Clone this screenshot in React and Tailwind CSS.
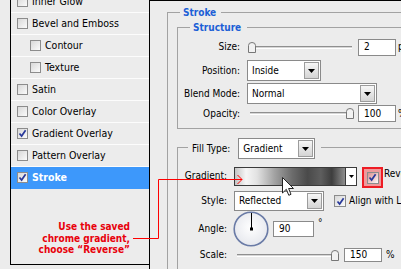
import React from 'react';

const Check = ({ checked, className = '' }) => (
  <span className={`flex size-[11px] shrink-0 items-center justify-center border border-[#8c8c8c] bg-linear-to-br from-[#d8d8d8] to-[#fbfbfb] ${className}`}>
    {checked && (
      <svg width="9" height="9" viewBox="0 0 9 9">
        <path d="M1.5 4.5 L3.6 7 L7.6 1.2" fill="none" stroke="#28389a" strokeWidth="1.7" />
      </svg>
    )}
  </span>
);

const Arrow = () => (
  <svg width="7" height="4" viewBox="0 0 7 4">
    <path d="M0 0 H7 L3.5 4 Z" fill="#000" />
  </svg>
);

const Combo = ({ value, className = '' }) => (
  <div className={`flex shrink-0 items-stretch border border-[#8a8a8a] bg-white ${className}`}>
    <span className="flex flex-1 items-center overflow-hidden whitespace-nowrap pl-[4px] text-[10px]">{value}</span>
    <span className="m-[1px] flex w-[15px] items-center justify-center border border-[#9c9c9c] bg-linear-to-b from-[#f7f7f7] to-[#d4d4d4]">
      <Arrow />
    </span>
  </div>
);

const Field = ({ value, className = '' }) => (
  <div className={`flex shrink-0 items-center border border-[#8a8a8a] bg-white pl-[5px] text-[10px] ${className}`}>{value}</div>
);

const Thumb = ({ className = '' }) => (
  <svg width="8" height="11" viewBox="0 0 8 11" className={`absolute top-0 ${className}`}>
    <path d="M0.5 3.5 Q0.5 0.5 4 0.5 Q7.5 0.5 7.5 3.5 V10.5 H0.5 Z" fill="#f2f2f2" stroke="#777" />
  </svg>
);

const Slider = ({ className = '', thumb = 'left-0' }) => (
  <div className={`relative h-[11px] shrink-0 ${className}`}>
    <div className="mt-[4px] h-[3px] border-t border-b border-t-[#8f8f8f] border-b-white bg-[#d6d6d6]" />
    <Thumb className={thumb} />
  </div>
);

const Label = ({ children, className = '' }) => (
  <span className={`shrink-0 text-right text-[10px] ${className}`}>{children}</span>
);

const styles = [
  { label: 'Inner Glow' },
  { label: 'Bevel and Emboss' },
  { label: 'Contour', indent: true },
  { label: 'Texture', indent: true },
  { label: 'Satin' },
  { label: 'Color Overlay' },
  { label: 'Gradient Overlay', checked: true },
  { label: 'Pattern Overlay' },
  { label: 'Stroke', checked: true, selected: true },
];

const StyleList = () => (
  <div className="h-full w-[150px] shrink-0 border-r border-black pl-[10px]">
    <div className="flex h-[265px] flex-col overflow-hidden border-b border-l border-black">
      <div className="-mt-[9px]">
        {styles.map((s) => (
          <div
            key={s.label}
            className={`flex h-[22px] items-center gap-[4px] border-b ${s.indent ? 'pl-[19px]' : 'pl-[6px]'} ${
              s.selected ? 'border-transparent bg-[#3d98fb] font-bold text-white' : 'border-[#fcfcfc]'
            }`}
          >
            <Check checked={s.checked} />
            <span className="text-[10.5px] leading-none">{s.label}</span>
          </div>
        ))}
      </div>
      <div className="mt-[32px] pr-[19px] text-right text-[10px] font-bold leading-[11.5px] text-[#e8000b]">
        <div>Use the saved</div>
        <div>chrome gradient,</div>
        <div>choose “Reverse”</div>
      </div>
    </div>
  </div>
);

const AngleDial = () => (
  <svg width="36" height="36" viewBox="0 0 36 36" className="ml-[6px] shrink-0">
    <defs>
      <radialGradient id="dial" cx="50%" cy="45%" r="60%">
        <stop offset="0%" stopColor="#ffffff" />
        <stop offset="100%" stopColor="#e4e6ec" />
      </radialGradient>
    </defs>
    <circle cx="18" cy="18" r="16.8" fill="url(#dial)" stroke="#6a7ba6" strokeWidth="1.6" />
    <line x1="18.5" y1="2" x2="18.5" y2="18" stroke="#000" />
    <rect x="17" y="16.5" width="3" height="3" fill="#000" />
  </svg>
);

const StrokePanel = () => (
  <div className="h-full flex-1 overflow-hidden border-t border-black pl-[17px] pt-[11px]">
    <div className="relative h-[300px] w-[300px] border-l border-t border-[#a2a2a2]">
      <span className="absolute -top-[7px] left-[12px] bg-[#ececec] pl-[3px] pr-[5px] text-[10px] font-bold leading-[13px] text-[#1c5fd6]">
        Stroke
      </span>

      <div className="relative ml-[9px] mt-[14px] h-[102px] border-b border-l border-t border-[#a2a2a2]">
        <span className="absolute -top-[7px] left-[12px] bg-[#ececec] pl-[3px] pr-[6px] text-[10px] font-bold leading-[13px] text-[#1c5fd6]">
          Structure
        </span>
        <div className="mt-[10px] flex h-[18px] items-center">
          <Label className="w-[62px]">Size:</Label>
          <Slider className="ml-[8px] w-[104px]" thumb="left-0" />
          <Field value="2" className="ml-[6px] h-[17px] w-[38px]" />
          <span className="ml-[2px] text-[10px]">px</span>
        </div>
        <div className="mt-[4px] flex h-[21px] items-center">
          <Label className="w-[62px]">Position:</Label>
          <Combo value="Inside" className="ml-[7px] h-[21px] w-[74px]" />
        </div>
        <div className="mt-[2px] flex h-[21px] items-center">
          <Label className="w-[62px]">Blend Mode:</Label>
          <Combo value="Normal" className="ml-[7px] h-[21px] w-[130px]" />
        </div>
        <div className="mt-[1px] flex h-[17px] items-center">
          <Label className="w-[62px]">Opacity:</Label>
          <Slider className="ml-[10px] w-[104px]" thumb="right-0" />
          <Field value="100" className="ml-[4px] h-[17px] w-[38px]" />
          <span className="ml-[2px] text-[10px]">%</span>
        </div>
      </div>

      <div className="relative ml-[9px] mt-[18px] h-[200px] border-l border-t border-[#a2a2a2]">
        <div className="absolute -top-[10px] left-[10px] flex items-center gap-[8px] bg-[#ececec] pl-[4px] pr-[6px]">
          <span className="text-[10px]">Fill Type:</span>
          <Combo value="Gradient" className="h-[21px] w-[77px]" />
        </div>

        <div className="mt-[19px] flex h-[21px] items-start">
          <Label className="flex h-[18px] w-[49px] items-center justify-end">Gradient:</Label>
          <div className="ml-[7px] flex h-[19px] w-[123px] shrink-0 border border-[#3a3a3a] bg-white">
            <div className="flex-1 [background-image:linear-gradient(90deg,#c4c4c4_0%,#f6f6f6_10%,#e2e2e2_20%,#a2a2a2_36%,#6c6c6c_52%,#4a4a4a_66%,#5e5e5e_78%,#3e3e3e_88%,#8e8e8e_100%)]" />
            <div className="flex w-[11px] items-center justify-center border-l border-[#3a3a3a]">
              <svg width="5" height="3" viewBox="0 0 5 3">
                <path d="M0 0 H5 L2.5 3 Z" fill="#000" />
              </svg>
            </div>
          </div>
          <div className="ml-[5px] flex size-[21px] shrink-0 items-center justify-center border-2 border-[#ee1c24] bg-[#ee9a9c]">
            <Check checked className="size-[12px] border-[#7c7c7c] from-[#d89090] to-[#f2b4b4]" />
          </div>
          <span className="ml-[1px] mt-[2px] whitespace-nowrap text-[10px]">Reverse</span>
        </div>

        <div className="mt-[3px] flex h-[20px] items-center">
          <Label className="w-[49px]">Style:</Label>
          <Combo value="Reflected" className="ml-[7px] h-[20px] w-[90px]" />
          <Check checked className="ml-[10px] size-[12px]" />
          <span className="ml-[3px] whitespace-nowrap text-[10px]">Align with Layer</span>
        </div>

        <div className="flex h-[35px] items-center">
          <Label className="w-[49px]">Angle:</Label>
          <AngleDial />
          <Field value="90" className="ml-[4px] h-[16px] w-[41px]" />
          <span className="ml-[4px] self-start pt-[7px] text-[10px]">°</span>
        </div>

        <div className="mt-[2px] flex h-[14px] items-center">
          <Label className="w-[49px]">Scale:</Label>
          <Slider className="ml-[10px] w-[102px]" thumb="right-0" />
          <Field value="150" className="ml-[5px] h-[14px] w-[38px]" />
          <span className="ml-[4px] text-[10px]">%</span>
        </div>
      </div>
    </div>
  </div>
);

export default function App() {
  return (
    <div className="relative flex h-[269px] w-[401px] overflow-hidden bg-[#ececec] font-['DejaVu_Sans_Condensed','DejaVu_Sans',sans-serif] leading-none text-black">
      <StyleList />
      <StrokePanel />

      <svg width="401" height="269" className="pointer-events-none absolute left-0 top-0">
        <polyline points="133,238.5 158.5,238.5 158.5,179.5 242,179.5" fill="none" stroke="#f00" strokeWidth="1" />
        <polyline points="237.5,175 242,179.5 237.5,184" fill="none" stroke="#f00" strokeWidth="1" />
      </svg>

      <svg width="13" height="20" viewBox="0 0 13 20" className="pointer-events-none absolute left-[282px] top-[177px]">
        <path d="M0.5 0.5 V16 L4.3 12.3 L6.8 18.3 L9 17.3 L6.6 11.5 L11.5 11.5 Z" fill="#fff" stroke="#222" strokeLinejoin="round" />
      </svg>
    </div>
  );
}
